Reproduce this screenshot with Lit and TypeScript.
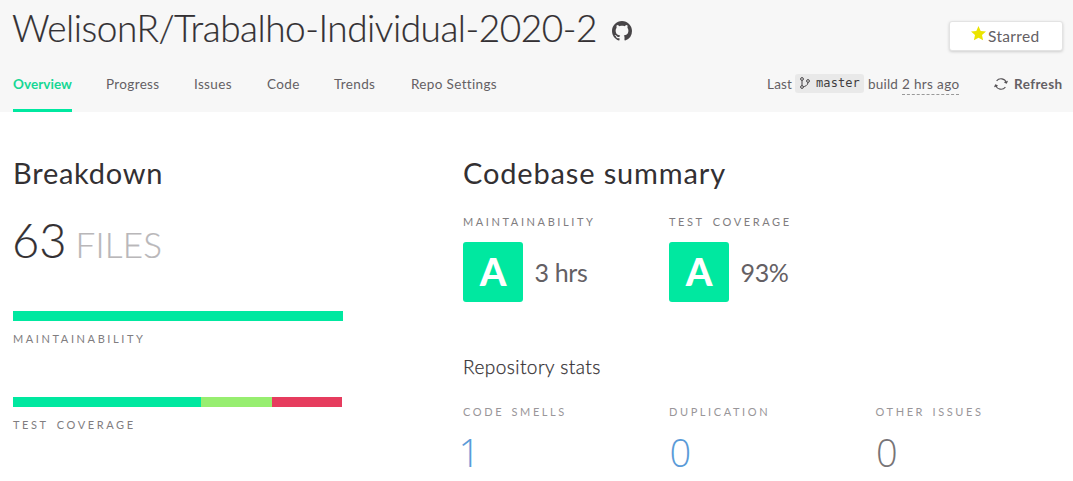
import { LitElement, html, css, svg } from "lit";
import { customElement } from "lit/decorators.js";
import { classMap } from "lit/directives/class-map.js";
import { styleMap } from "lit/directives/style-map.js";

const tabs = ["Overview", "Progress", "Issues", "Code", "Trends", "Repo Settings"];

const githubIcon = svg`<path d="M8 0C3.58 0 0 3.58 0 8c0 3.54 2.29 6.53 5.47 7.59.4.07.55-.17.55-.38 0-.19-.01-.82-.01-1.49-2.01.37-2.53-.49-2.69-.94-.09-.23-.48-.94-.82-1.13-.28-.15-.68-.52-.01-.53.63-.01 1.08.58 1.23.82.72 1.21 1.87.87 2.33.66.07-.52.28-.87.51-1.07-1.78-.2-3.64-.89-3.64-3.95 0-.87.31-1.59.82-2.15-.08-.2-.36-1.02.08-2.12 0 0 .67-.21 2.2.82.64-.18 1.32-.27 2-.27s1.36.09 2 .27c1.53-1.04 2.2-.82 2.2-.82.44 1.1.16 1.92.08 2.12.51.56.82 1.27.82 2.15 0 3.07-1.87 3.75-3.65 3.95.29.25.54.73.54 1.48 0 1.07-.01 1.93-.01 2.2 0 .21.15.46.55.38A8.01 8.01 0 0 0 16 8c0-4.42-3.58-8-8-8z"/>`;

@customElement("repo-header")
export class RepoHeader extends LitElement {
  static styles = css`
    :host { display: block; height: 112px; background: #f7f7f7; color: #646064; box-sizing: border-box; padding: 0 10px 0 13px; }
    .top { display: flex; height: 72px; align-items: flex-start; }
    .title { margin: 4px 0 0 -1px; font-size: 37px; line-height: 48px; font-weight: 300; color: #333033; letter-spacing: -0.48px; white-space: nowrap; width: 600px; -webkit-text-stroke: 0.2px #333033; }
    .github { width: 20px; height: 20px; margin-top: 21px; fill: #484548; }
    .starred { box-sizing: border-box; display: flex; margin: 21px 0 0 auto; width: 114px; height: 30px; padding: 4px 0 0 20px; border: 1px solid #e3e3e3; border-radius: 3px; background: #fff; box-shadow: 0 1px 3px rgba(0,0,0,.17); font: 400 15.5px/20px Lato, sans-serif; letter-spacing: 0.35px; color: #646064; }
    .star { width: 15px; height: 15px; margin: 0 2px 0 1px; fill: #ebe400; }
    .bar { display: flex; height: 40px; justify-content: space-between; }
    .tabs { display: grid; grid-template-columns: 59px 54px 39px 33px 43px 90px; gap: 34px; height: 40px; }
    .tab { white-space: nowrap; font-size: 13.5px; line-height: 24px; box-sizing: border-box; height: 40px; letter-spacing: 0.35px; }
    .active { color: #17d795; font-weight: 700; letter-spacing: 0.05px; border-bottom: 3px solid #00e8a0; }
    .meta { display: flex; font-size: 13.5px; line-height: 24px; white-space: nowrap; }
    .last { width: 28px; letter-spacing: 0.2px; }
    .branch { display: flex; box-sizing: border-box; width: 69px; height: 19px; margin: 2px 4px 0 0; padding-left: 5px; background: #e9e9e9; border-radius: 3px; font: 12px/18px "DejaVu Sans Mono", monospace; letter-spacing: 0.1px; color: #403d40; }
    .fork { width: 10px; height: 12px; margin: 3px 6px 0 0; fill: none; stroke: #484548; stroke-width: 1; }
    .build { width: 34px; letter-spacing: 0.2px; }
    .ago { height: 22px; width: 57px; letter-spacing: 0.35px; border-bottom: 1px dashed #999; }
    .refresh { display: flex; width: 69px; margin-left: 35px; font-weight: 700; letter-spacing: 0.4px; }
    .cycle { width: 14px; height: 14px; margin: 5px 6px 0 0; fill: none; stroke: #555255; stroke-width: 1.1; }
  `;

  render() {
    return html`
      <div class="top">
        <h1 class="title">WelisonR/Trabalho-Individual-2020-2</h1>
        <svg class="github" viewBox="0 0 16 16">${githubIcon}</svg>
        <button class="starred">
          <svg class="star" viewBox="0 0 15 15"><path d="M7.5 0 9.7 4.9 15 5.5 11 9.1 12.1 14.3 7.5 11.7 2.9 14.3 4 9.1 0 5.5 5.3 4.9z" /></svg>
          <span>Starred</span>
        </button>
      </div>
      <div class="bar">
        <nav class="tabs">
          ${tabs.map((t, i) => html`<a class=${classMap({ tab: true, active: i === 0 })}>${t}</a>`)}
        </nav>
        <div class="meta">
          <span class="last">Last</span>
          <span class="branch">
            <svg class="fork" viewBox="0 0 10 12"><circle cx="2" cy="2" r="1.4" /><circle cx="8" cy="4" r="1.4" /><circle cx="2" cy="10" r="1.4" /><path d="M2 3.4V8.6M8 5.4C8 8.4 5 9.4 3.3 9.8" /></svg>
            <span>master</span>
          </span>
          <span class="build">build</span>
          <span class="ago">2 hrs ago</span>
          <span class="refresh">
            <svg class="cycle" viewBox="0 0 14 14"><path d="M2.6 3.9A5.6 5.6 0 0 1 12.3 5.6M13.4 3.9L12.5 6L10.4 5.2M11.4 10.1A5.6 5.6 0 0 1 1.7 8.4M.6 10.1L1.5 8L3.6 8.8" /></svg>
            <span>Refresh</span>
          </span>
        </div>
      </div>
    `;
  }
}

@customElement("breakdown-bar")
export class BreakdownBar extends LitElement {
  static properties = { segments: { attribute: false }, label: {} };
  declare segments: { color: string; width: number }[];
  declare label: string;

  static styles = css`
    :host { display: block; height: 86px; }
    .track { display: flex; height: 10px; }
    .label { margin-top: 10px; font-size: 11px; line-height: 16px; letter-spacing: 2.6px; word-spacing: 3px; color: #807d80; white-space: nowrap; }
  `;

  render() {
    return html`
      <div class="track">${this.segments.map((s) => html`<div style=${styleMap({ width: `${s.width}px`, background: s.color })}></div>`)}</div>
      <div class="label">${this.label}</div>
    `;
  }
}

@customElement("app-root")
export class AppRoot extends LitElement {
  static styles = css`
    :host { display: block; height: 481px; overflow: hidden; background: #fff; font-family: Lato, sans-serif; color: #646064; }
    .page { display: grid; grid-template-columns: 330px 1fr; column-gap: 120px; padding: 43px 0 0 13px; }
    h2 { margin: 0; font-size: 29px; line-height: 36px; font-weight: 400; color: #333033; letter-spacing: 0.75px; white-space: nowrap; }
    .summary { letter-spacing: 0.85px; }
    .files { display: flex; align-items: baseline; gap: 9px; height: 60px; margin: 19px 0 41px -1px; line-height: 60px; color: #333033; font-size: 47px; font-weight: 300; white-space: nowrap; -webkit-text-stroke: 0.2px; }
    .unit { font-size: 35px; color: #b9b7b9; letter-spacing: 0.2px; }
    .grades { display: grid; grid-template-columns: 206px 206px; height: 90px; margin-top: 23px; }
    .label { font-size: 11px; line-height: 16px; letter-spacing: 2.6px; word-spacing: 3px; color: #807d80; white-space: nowrap; }
    .grade { display: flex; height: 60px; margin-top: 12px; align-items: center; gap: 12px; font-size: 25px; letter-spacing: -0.35px; line-height: 30px; }
    .value { margin: -1px 0 0 -0.5px; }
    .letter { width: 60px; height: 60px; border-radius: 3px; background: #00e8a0; color: #fff; font-size: 38px; line-height: 59px; font-weight: 900; text-align: center; }
    h3 { margin: 51px 0 0; font-size: 19px; line-height: 24px; font-weight: 300; letter-spacing: 0.45px; color: #333033; white-space: nowrap; -webkit-text-stroke: 0.25px; }
    .stats { display: grid; grid-template-columns: 206px 206.5px 150px; margin-top: 25px; }
    .stats .label { color: #999699; word-spacing: 2px; }
    .number { margin-top: 8px; font-family: "Open Sans", Lato, sans-serif; font-size: 38px; line-height: 48px; font-weight: 300; color: #777477; text-indent: 0.5px; }
    .link { color: #5b9bd8; }
    .one { text-indent: -4.5px; }
  `;

  render() {
    return html`
      <repo-header></repo-header>
      <main class="page">
        <section>
          <h2 class="breakdown">Breakdown</h2>
          <div class="files"><span class="count">63</span><span class="unit">FILES</span></div>
          <breakdown-bar label="MAINTAINABILITY" .segments=${[{ color: "#00e8a0", width: 330 }]}></breakdown-bar>
          <breakdown-bar label="TEST COVERAGE" .segments=${[
            { color: "#00e8a0", width: 188 },
            { color: "#97ee70", width: 71 },
            { color: "#e63c5e", width: 70 },
          ]}></breakdown-bar>
        </section>
        <section>
          <h2 class="summary">Codebase summary</h2>
          <div class="grades">
            ${[["MAINTAINABILITY", "3 hrs"], ["TEST COVERAGE", "93%"]].map(([label, value]) => html`
              <div><div class="label">${label}</div><div class="grade"><div class="letter">A</div><span class="value">${value}</span></div></div>`)}
          </div>
          <h3>Repository stats</h3>
          <div class="stats">
            ${[["CODE SMELLS", "1"], ["DUPLICATION", "0"], ["OTHER ISSUES", "0"]].map(([label, value], i) => html`
              <div><div class="label">${label}</div><div class=${classMap({ number: true, link: i < 2, one: value === "1" })}>${value}</div></div>`)}
          </div>
        </section>
      </main>
    `;
  }
}
